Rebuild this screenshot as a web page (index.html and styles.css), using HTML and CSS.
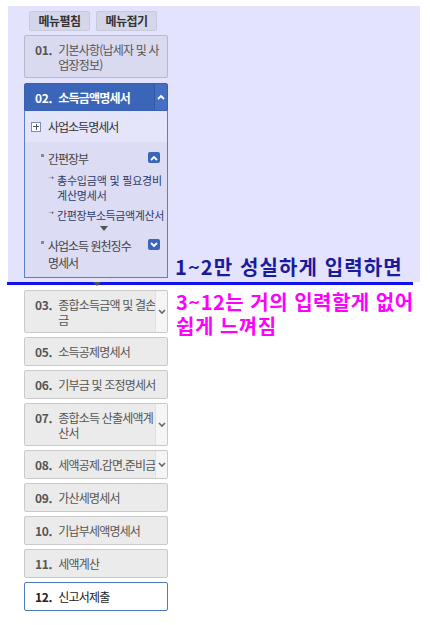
FILE: index.html
```html
<!DOCTYPE html>
<html lang="ko">
<head>
<meta charset="utf-8">
<link rel="stylesheet" href="styles.css">
</head>
<body>
<div class="top">
  <div class="menu">
    <div class="btns">
      <button class="btn">메뉴펼침</button>
      <button class="btn">메뉴접기</button>
    </div>
    <div class="item item-lav two">
      <span class="num">01.</span><span class="txt">기본사항(납세자 및 사업장정보)</span>
    </div>
    <div class="group">
      <div class="g-head">
        <span class="num">02.</span><span class="txt">소득금액명세서</span>
        <span class="g-chev"><svg width="8" height="6" viewBox="0 0 8 6"><path d="M1 5 L4 2 L7 5" fill="none" stroke="#fff" stroke-width="1.8"/></svg></span>
      </div>
      <div class="g-body">
        <div class="row-plus"><span class="plus"></span>사업소득명세서</div>
        <div class="sub">
          <div class="sub-head"><span class="dot"></span><span class="sub-txt">간편장부</span>
            <span class="sbtn"><svg width="8" height="6" viewBox="0 0 8 6"><path d="M1 5 L4 2 L7 5" fill="none" stroke="#fff" stroke-width="1.8"/></svg></span></div>
          <div class="leaf leaf1"><span class="arr">➝</span><span class="leaf-txt">총수입금액 및 필요경비 계산명세서</span></div>
          <div class="leaf leaf2"><span class="arr">➝</span><span class="leaf-txt">간편장부소득금액계산서</span></div>
          <div class="tri"></div>
          <div class="sub-head sub-head2"><span class="dot"></span><span class="sub-txt">사업소득 원천징수 명세서</span>
            <span class="sbtn"><svg width="8" height="6" viewBox="0 0 8 6"><path d="M1 1 L4 4 L7 1" fill="none" stroke="#fff" stroke-width="1.8"/></svg></span></div>
        </div>
      </div>
    </div>
  </div>
  <div class="note1">1~2만 성실하게 입력하면</div>
</div>
<div class="rule"><span class="rule-tri"></span></div>
<div class="bottom">
  <div class="menu menu2">
    <div class="item two chev"><span class="num">03.</span><span class="txt">종합소득금액 및 결손금</span><span class="i-chev"><svg width="8" height="6" viewBox="0 0 8 6"><path d="M1 1 L4 4 L7 1" fill="none" stroke="#666" stroke-width="1.6"/></svg></span></div>
    <div class="item"><span class="num">05.</span><span class="txt">소득공제명세서</span></div>
    <div class="item"><span class="num">06.</span><span class="txt">기부금 및 조정명세서</span></div>
    <div class="item two chev"><span class="num">07.</span><span class="txt">종합소득 산출세액계산서</span><span class="i-chev"><svg width="8" height="6" viewBox="0 0 8 6"><path d="M1 1 L4 4 L7 1" fill="none" stroke="#666" stroke-width="1.6"/></svg></span></div>
    <div class="item chev"><span class="num">08.</span><span class="txt nowrap">세액공제.감면.준비금</span><span class="i-chev"><svg width="8" height="6" viewBox="0 0 8 6"><path d="M1 1 L4 4 L7 1" fill="none" stroke="#666" stroke-width="1.6"/></svg></span></div>
    <div class="item"><span class="num">09.</span><span class="txt">가산세명세서</span></div>
    <div class="item"><span class="num">10.</span><span class="txt">기납부세액명세서</span></div>
    <div class="item"><span class="num">11.</span><span class="txt">세액계산</span></div>
    <div class="item item-cur"><span class="num">12.</span><span class="txt">신고서제출</span></div>
  </div>
  <div class="note2">
    <div class="note-line">3~12는 거의 입력할게 없어</div>
    <div class="note-line">쉽게 느껴짐</div>
  </div>
</div>
</body>
</html>
```
FILE: styles.css
```css
* { box-sizing: border-box; }
body {
  margin: 0;
  background: #fff;
  font-family: "Noto Sans CJK KR", "Malgun Gothic", sans-serif;
  font-size: 12px;
  letter-spacing: -0.8px;
  color: #555;
}
.top {
  margin: 6px 10px 0 8px;
  height: 276px;
  background: #e3e3fd;
  padding: 5px 0 0 16px;
  display: flex;
  align-items: flex-end;
}
.menu {
  width: 144px;
  flex: none;
  align-self: flex-start;
  display: flex;
  flex-direction: column;
}
.btns {
  display: flex;
  gap: 6px;
  padding-left: 5px;
  margin-bottom: 4px;
}
.btn {
  width: 61px;
  height: 20px;
  padding: 0;
  border: 1px solid #c9c9dc;
  border-radius: 2px;
  background: #d6d6ea;
  font-family: inherit;
  font-size: 12px;
  font-weight: bold;
  letter-spacing: -0.5px;
  color: #333;
  line-height: 18px;
}
.item {
  position: relative;
  display: flex;
  height: 29px;
  padding: 0 4px 0 10px;
  align-items: center;
  background: #ebebeb;
  border: 1px solid #c9c9c9;
  border-radius: 2px;
  line-height: 15px;
  margin-bottom: 4px;
  overflow: hidden;
}
.item.two {
  height: 43px;
  align-items: flex-start;
  padding-top: 6px;
}
.item-lav {
  background: #d9d9ef;
  border-color: #b9b9cc;
  color: #555;
  margin-bottom: 5px;
}
.num {
  font-weight: bold;
  flex: none;
  margin-right: 6px;
  letter-spacing: -0.3px;
}
.txt { flex: 1; }
.nowrap { white-space: nowrap; }
.i-chev {
  position: absolute;
  right: 0;
  top: 0;
  bottom: 0;
  width: 12px;
  background: #f5f5f5;
  border-left: 1px solid #e0e0e0;
  display: flex;
  align-items: center;
  justify-content: center;
}
.item-cur {
  background: #fff;
  border-color: #4a7cc0;
  color: #222;
}
.group {
  display: flex;
  flex-direction: column;
}
.g-head {
  position: relative;
  height: 28px;
  flex: none;
  background: #3a65b8;
  border: 1px solid #3760b0;
  border-radius: 2px 2px 0 0;
  color: #fff;
  font-weight: bold;
  display: flex;
  align-items: center;
  padding-left: 10px;
}
.g-head .txt { letter-spacing: -0.8px; }
.g-chev {
  position: absolute;
  right: 0;
  top: 0;
  bottom: 0;
  width: 13px;
  background: #4570c2;
  border-left: 1px solid #2f58a6;
  display: flex;
  align-items: center;
  justify-content: center;
}
.g-body {
  height: 167px;
  flex: none;
  border: 1px solid #5a7fc4;
  border-top: none;
  background: #e4e4fb;
  display: flex;
  flex-direction: column;
  overflow: hidden;
}
.row-plus {
  height: 31px;
  flex: none;
  display: flex;
  align-items: center;
  padding-left: 6px;
  color: #333;
  font-size: 12px;
  letter-spacing: -1px;
}
.plus {
  width: 10px;
  height: 10px;
  border: 1px solid #7a8fb8;
  background: #fff;
  margin-right: 7px;
  position: relative;
  flex: none;
}
.plus::before, .plus::after {
  content: "";
  position: absolute;
  background: #555;
}
.plus::before { left: 1px; right: 1px; top: 3.5px; height: 1px; }
.plus::after { top: 1px; bottom: 1px; left: 3.5px; width: 1px; }
.sub {
  flex: 1;
  background: #dcdcf5;
  padding: 8px 2px 0 15px;
  display: flex;
  flex-direction: column;
}
.sub-head {
  position: relative;
  display: flex;
  align-items: flex-start;
  color: #444;
  font-size: 12px;
  letter-spacing: -1px;
  line-height: 17px;
  min-height: 20px;
  flex: none;
}
.sub-txt { width: 92px; }
.dot {
  width: 3px;
  height: 3px;
  background: #888;
  margin: 4px 4px 0 1px;
  flex: none;
}
.sbtn {
  position: absolute;
  right: 5px;
  top: 2px;
  width: 12px;
  height: 11px;
  border-radius: 2px;
  background: #3a65b8;
  display: flex;
  align-items: center;
  justify-content: center;
}
.leaf {
  display: flex;
  flex: none;
  color: #2b3d6b;
  font-size: 11px;
  letter-spacing: -0.2px;
  line-height: 15px;
  padding-left: 8px;
}
.leaf1 { margin-top: 3px; }
.leaf2 { margin-top: 5px; }
.leaf1 .leaf-txt { width: 108px; }
.leaf2 .leaf-txt { white-space: nowrap; letter-spacing: -0.4px; }
.arr {
  font-size: 7px;
  letter-spacing: 0;
  color: #444;
  width: 9px;
  flex: none;
  line-height: 9px;
}
.tri {
  flex: none;
  width: 0;
  height: 0;
  border-left: 4px solid transparent;
  border-right: 4px solid transparent;
  border-top: 5px solid #555;
  margin: 3px 0 6px 60px;
}
.note1 {
  margin: 0 0 3px 7px;
  font-size: 20px;
  font-weight: bold;
  color: #1a1a9a;
  letter-spacing: 1.1px;
  line-height: 24px;
}
.rule {
  position: relative;
  margin: 0 17px 0 7px;
  height: 3px;
  background: #1212ee;
}
.rule-tri {
  position: absolute;
  left: 86px;
  top: 0;
  width: 0;
  height: 0;
  border-left: 4px solid transparent;
  border-right: 4px solid transparent;
  border-top: 4px solid #555;
}
.bottom {
  display: flex;
  padding: 5px 0 0 24px;
}
.menu2 { align-self: flex-start; }
.note2 {
  margin-left: 8px;
  font-size: 20px;
  font-weight: bold;
  color: #ff00ff;
  letter-spacing: 0.5px;
  display: flex;
  flex-direction: column;
}
.note-line {
  height: 24px;
  line-height: 24px;
}
```
